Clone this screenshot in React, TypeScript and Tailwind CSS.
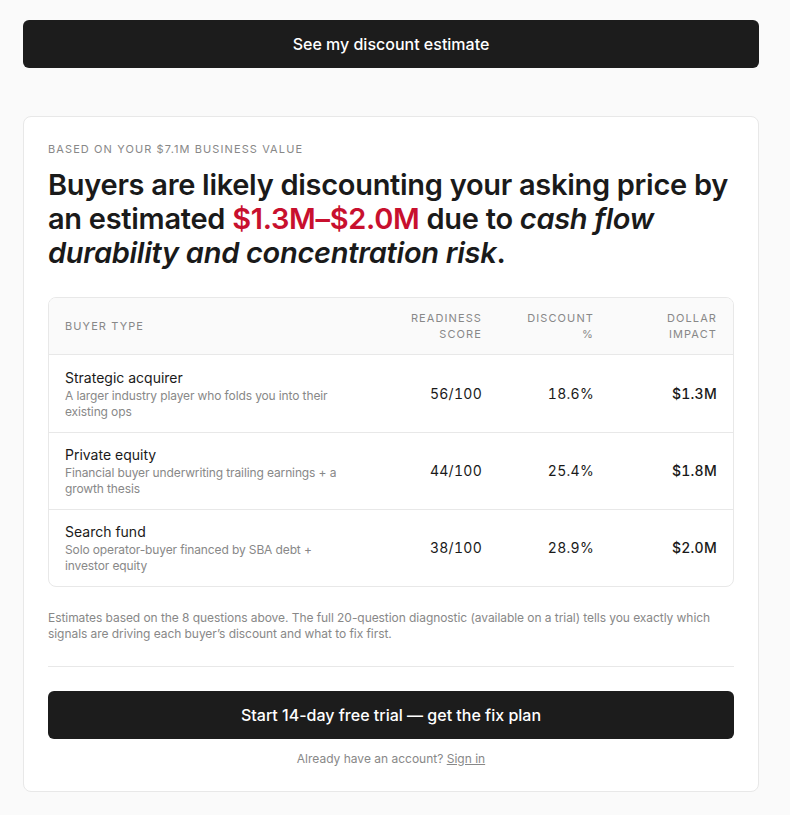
import React from "react";

const buyers = [
  {
    name: "Strategic acquirer",
    desc: "A larger industry player who folds you into their existing ops",
    score: "56/100",
    discount: "18.6%",
    impact: "$1.3M",
  },
  {
    name: "Private equity",
    desc: "Financial buyer underwriting trailing earnings + a growth thesis",
    score: "44/100",
    discount: "25.4%",
    impact: "$1.8M",
  },
  {
    name: "Search fund",
    desc: "Solo operator-buyer financed by SBA debt + investor equity",
    score: "38/100",
    discount: "28.9%",
    impact: "$2.0M",
  },
];

const App = () => {
  return (
    <div className="min-h-screen bg-[#fafafa] font-['Inter',sans-serif] text-[#1a1a1a] pl-[23px] pr-[31px] pt-5 pb-6">
      <button className="w-full h-12 rounded-md bg-[#1c1c1c] text-white text-base font-medium">
        See my discount estimate
      </button>

      <div className="mt-12 bg-white border border-[#e8e8e8] rounded-lg px-6 pt-6 pb-6">
        <p className="text-[11px] tracking-[0.1em] uppercase text-[#888] leading-4">
          Based on your $7.1M business value
        </p>
        <h1 className="mt-[11px] text-[29px] font-semibold leading-[34px] tracking-[-0.01em]">
          Buyers are likely discounting your asking price by an estimated{" "}
          <span className="text-[#c8102e]">$1.3M–$2.0M</span> due to{" "}
          <em>cash flow durability and concentration risk</em>.
        </h1>

        <div className="mt-[27px] border border-[#e8e8e8] rounded-lg overflow-hidden">
          <div className="grid grid-cols-[1fr_120px_112px_123px] bg-[#fafafa] border-b border-[#e8e8e8] h-[57px] items-center text-[11px] tracking-[0.1em] uppercase text-[#888] leading-4">
            <div className="pl-4">Buyer type</div>
            <div className="pr-4 text-right">Readiness<br />score</div>
            <div className="pr-4 text-right">Discount<br />%</div>
            <div className="pr-4 text-right">Dollar<br />impact</div>
          </div>
          {buyers.map((b, i) => (
            <div
              key={b.name}
              className={`grid grid-cols-[1fr_120px_112px_123px] items-center h-[77px] ${i > 0 ? "border-t border-[#e8e8e8]" : ""}`}
            >
              <div className="pl-4">
                <div className="text-sm leading-5">{b.name}</div>
                <div className="text-xs leading-4 tracking-[-0.01em] text-[#888] max-w-[280px]">{b.desc}</div>
              </div>
              <div className="pr-4 text-right text-sm tabular-nums tracking-[0.02em]">{b.score}</div>
              <div className="pr-4 text-right text-sm tabular-nums tracking-[0.02em]">{b.discount}</div>
              <div className="pr-4 text-right text-sm font-medium tabular-nums tracking-[0.02em]">{b.impact}</div>
            </div>
          ))}
        </div>

        <p className="mt-[23px] text-xs leading-4 tracking-[-0.005em] text-[#888]">
          Estimates based on the 8 questions above. The full 20-question diagnostic (available on a trial) tells you exactly which signals are driving each buyer’s discount and what to fix first.
        </p>

        <div className="mt-6 border-t border-[#e8e8e8]" />

        <button className="mt-6 w-full h-12 rounded-md bg-[#1c1c1c] text-white text-base font-medium">
          Start 14-day free trial — get the fix plan
        </button>

        <p className="mt-3 text-center text-xs text-[#888]">
          Already have an account?{" "}
          <a href="#" className="underline">
            Sign in
          </a>
        </p>
      </div>
    </div>
  );
};

export default App;
